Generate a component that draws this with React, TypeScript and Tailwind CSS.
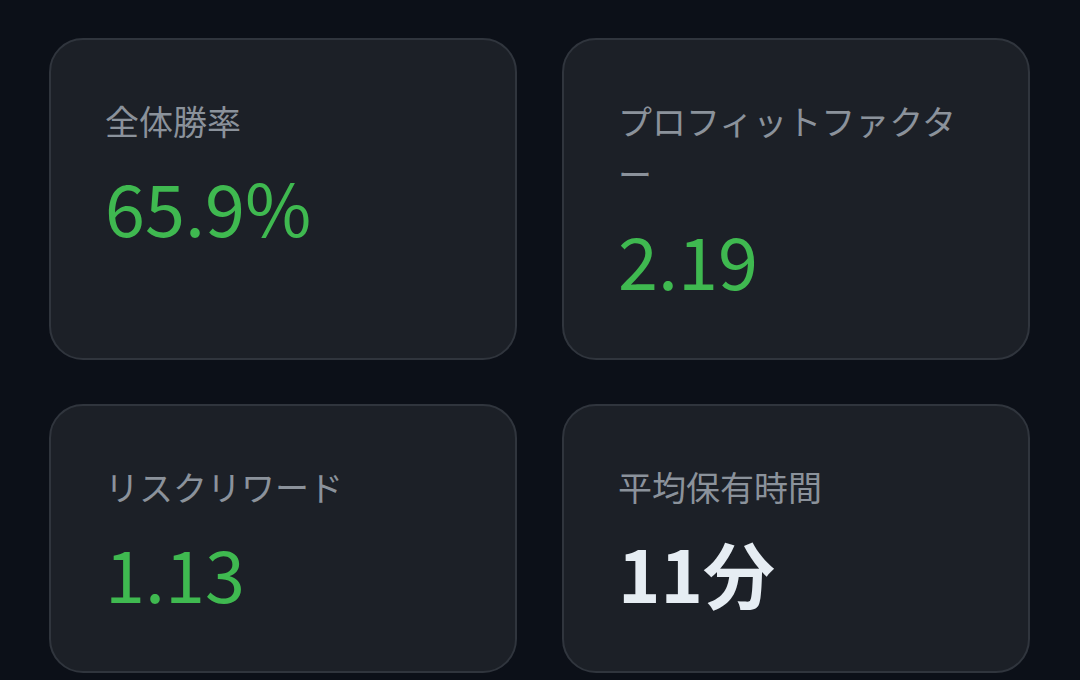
const stats = [
  { label: '全体勝率', value: '65.9%', tone: 'green' },
  { label: 'プロフィットファクター', value: '2.19', tone: 'green' },
  { label: 'リスクリワード', value: '1.13', tone: 'green' },
  { label: '平均保有時間', value: '11分', tone: 'white' },
]

function StatCard({ label, value, tone }: { label: string; value: string; tone: string }) {
  return (
    <div className="rounded-[34px] border-2 border-[#30353d] bg-[#1c2027] px-[54px] pt-[54px] pb-[55px]">
      <div className="text-[34px] leading-[53px] text-[#8b929b]">{label}</div>
      <div
        className={
          tone === 'green'
            ? 'mt-[15px] text-[72px] leading-[88px] font-normal text-[#3fb950]'
            : 'mt-[15px] text-[72px] leading-[88px] font-bold text-[#e6edf3]'
        }
      >
        {value}
      </div>
    </div>
  )
}

export default function App() {
  return (
    <div
      className="min-h-[680px] w-full bg-[#0c1018] pl-[49px] pr-[50px] pt-[38px]"
      style={{ fontFamily: '"Noto Sans CJK JP", "Noto Sans", sans-serif' }}
    >
      <div className="grid grid-cols-2 gap-x-[45px] gap-y-[44px]">
        {stats.map((s) => (
          <StatCard key={s.label} {...s} />
        ))}
      </div>
    </div>
  )
}
